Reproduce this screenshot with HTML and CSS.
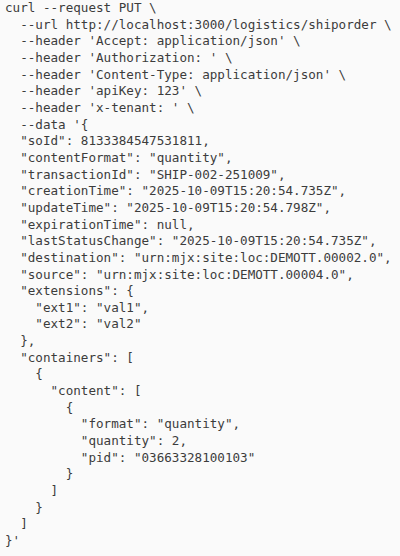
FILE: index.html
```html
<!DOCTYPE html>
<html lang="en">
<head>
<meta charset="utf-8">
<title>curl request</title>
<link rel="stylesheet" href="styles.css">
</head>
<body>
<pre class="code">curl --request PUT \
  --url http://localhost:3000/logistics/shiporder \
  --header 'Accept: application/json' \
  --header 'Authorization: ' \
  --header 'Content-Type: application/json' \
  --header 'apiKey: 123' \
  --header 'x-tenant: ' \
  --data '{
  "soId": 8133384547531811,
  "contentFormat": "quantity",
  "transactionId": "SHIP-002-251009",
  "creationTime": "2025-10-09T15:20:54.735Z",
  "updateTime": "2025-10-09T15:20:54.798Z",
  "expirationTime": null,
  "lastStatusChange": "2025-10-09T15:20:54.735Z",
  "destination": "urn:mjx:site:loc:DEMOTT.00002.0",
  "source": "urn:mjx:site:loc:DEMOTT.00004.0",
  "extensions": {
    "ext1": "val1",
    "ext2": "val2"
  },
  "containers": [
    {
      "content": [
        {
          "format": "quantity",
          "quantity": 2,
          "pid": "03663328100103"
        }
      ]
    }
  ]
}'</pre>
</body>
</html>
```
FILE: styles.css
```css
html, body {
  margin: 0;
  padding: 0;
  background: #fafafa;
}
.code {
  margin: 0;
  padding: 0 0 0 5px;
  font-family: "DejaVu Sans Mono", "Liberation Mono", monospace;
  font-size: 12.6px;
  line-height: 16.66px;
  color: #3c3c3c;
  white-space: pre;
}
```
